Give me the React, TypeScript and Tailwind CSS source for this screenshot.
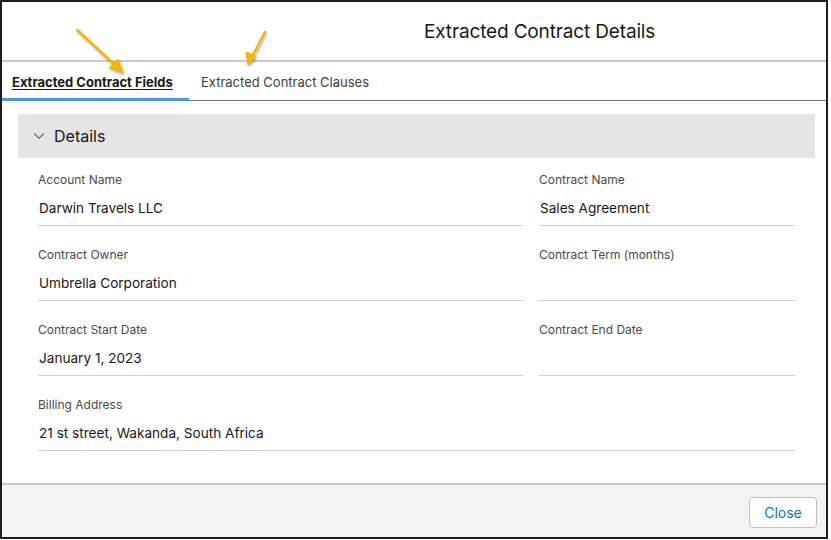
import React from "react";
import { ChevronDown } from "lucide-react";

const font = { fontFamily: "Inter, 'Noto Sans', sans-serif" };

interface Field {
  label: string;
  value?: string;
  wide?: boolean;
}

const fields: Field[] = [
  { label: "Account Name", value: "Darwin Travels LLC" },
  { label: "Contract Name", value: "Sales Agreement" },
  { label: "Contract Owner", value: "Umbrella Corporation" },
  { label: "Contract Term (months)" },
  { label: "Contract Start Date", value: "January 1, 2023" },
  { label: "Contract End Date" },
  { label: "Billing Address", value: "21 st street, Wakanda, South Africa", wide: true },
];

function FieldItem({ field }: { field: Field }) {
  return (
    <div
      className={`pt-[14px] pb-[7px] border-b border-[#cfcfcf] ${
        field.wide ? "col-span-2" : ""
      }`}
    >
      <div className="text-[12px] leading-4 text-[#4a4a4a]">{field.label}</div>
      <div className="mt-[10px] h-5 pl-px text-[13.6px] leading-5 text-[#181818]">
        {field.value ?? ""}
      </div>
    </div>
  );
}

function Arrows() {
  return (
    <svg
      className="absolute left-0 top-0 pointer-events-none"
      width="300"
      height="90"
      viewBox="0 0 300 90"
    >
      <defs>
        <filter id="sh" x="-20%" y="-20%" width="140%" height="140%">
          <feDropShadow dx="1" dy="1.5" stdDeviation="1.2" floodColor="#000" floodOpacity="0.35" />
        </filter>
      </defs>
      <g filter="url(#sh)" fill="#f4b400" stroke="#f4b400">
        <line x1="77" y1="30" x2="115" y2="65" strokeWidth="2.4" strokeLinecap="round" />
        <polygon points="123,73 109,68 118,59" strokeWidth="1" strokeLinejoin="round" />
        <line x1="265" y1="32" x2="252" y2="57" strokeWidth="2.4" strokeLinecap="round" />
        <polygon points="248,65 246,52 256,56" strokeWidth="1" strokeLinejoin="round" />
      </g>
    </svg>
  );
}

export default function App() {
  return (
    <div className="w-[831px] h-[540px] bg-white relative overflow-hidden" style={font}>
      <div className="w-[828px] h-[539px] border-2 border-[#1c1c1c] flex flex-col">
        <div className="h-[60px] shrink-0 border-b-2 border-[#c9c9c9] flex items-center pl-[422px] pt-[3px]">
          <h2 className="text-[19px] text-[#181818] tracking-[-0.15px]">
            Extracted Contract Details
          </h2>
        </div>

        <div className="h-[39px] shrink-0 flex items-stretch border-b border-[#747474]">
          <div className="w-[187px] -mb-px border-b-[3px] border-[#4a98ee] flex items-center pl-[10px] pt-[5px]">
            <span className="text-[13px] font-bold text-[#181818] underline underline-offset-2">
              Extracted Contract Fields
            </span>
          </div>
          <div className="flex items-center pl-[12px] pt-[4px]">
            <span className="text-[13px] text-[#3e3e3c]">Extracted Contract Clauses</span>
          </div>
        </div>

        <div className="flex-1 pt-[13px] pl-4 pr-[11px]">
          <div className="h-[44px] bg-[#e5e5e5] flex items-center pl-[12px] gap-[6px]">
            <ChevronDown size={18} strokeWidth={1.5} className="text-[#706e6b]" />
            <span className="text-[16px] text-[#181818]">Details</span>
          </div>
          <div className="grid grid-cols-[485px_256px] gap-x-4 gap-y-[7px] px-5">
            {fields.map((f) => (
              <FieldItem key={f.label} field={f} />
            ))}
          </div>
        </div>

        <div className="h-[54px] shrink-0 border-t-2 border-[#c9c9c9] bg-[#f3f3f3] flex items-center justify-end pr-[9px] pt-[3px]">
          <button className="h-[31px] w-[68px] rounded-[4px] border border-[#c2c0be] bg-white text-[14px] text-[#0176d3]">
            Close
          </button>
        </div>
      </div>
      <Arrows />
    </div>
  );
}
